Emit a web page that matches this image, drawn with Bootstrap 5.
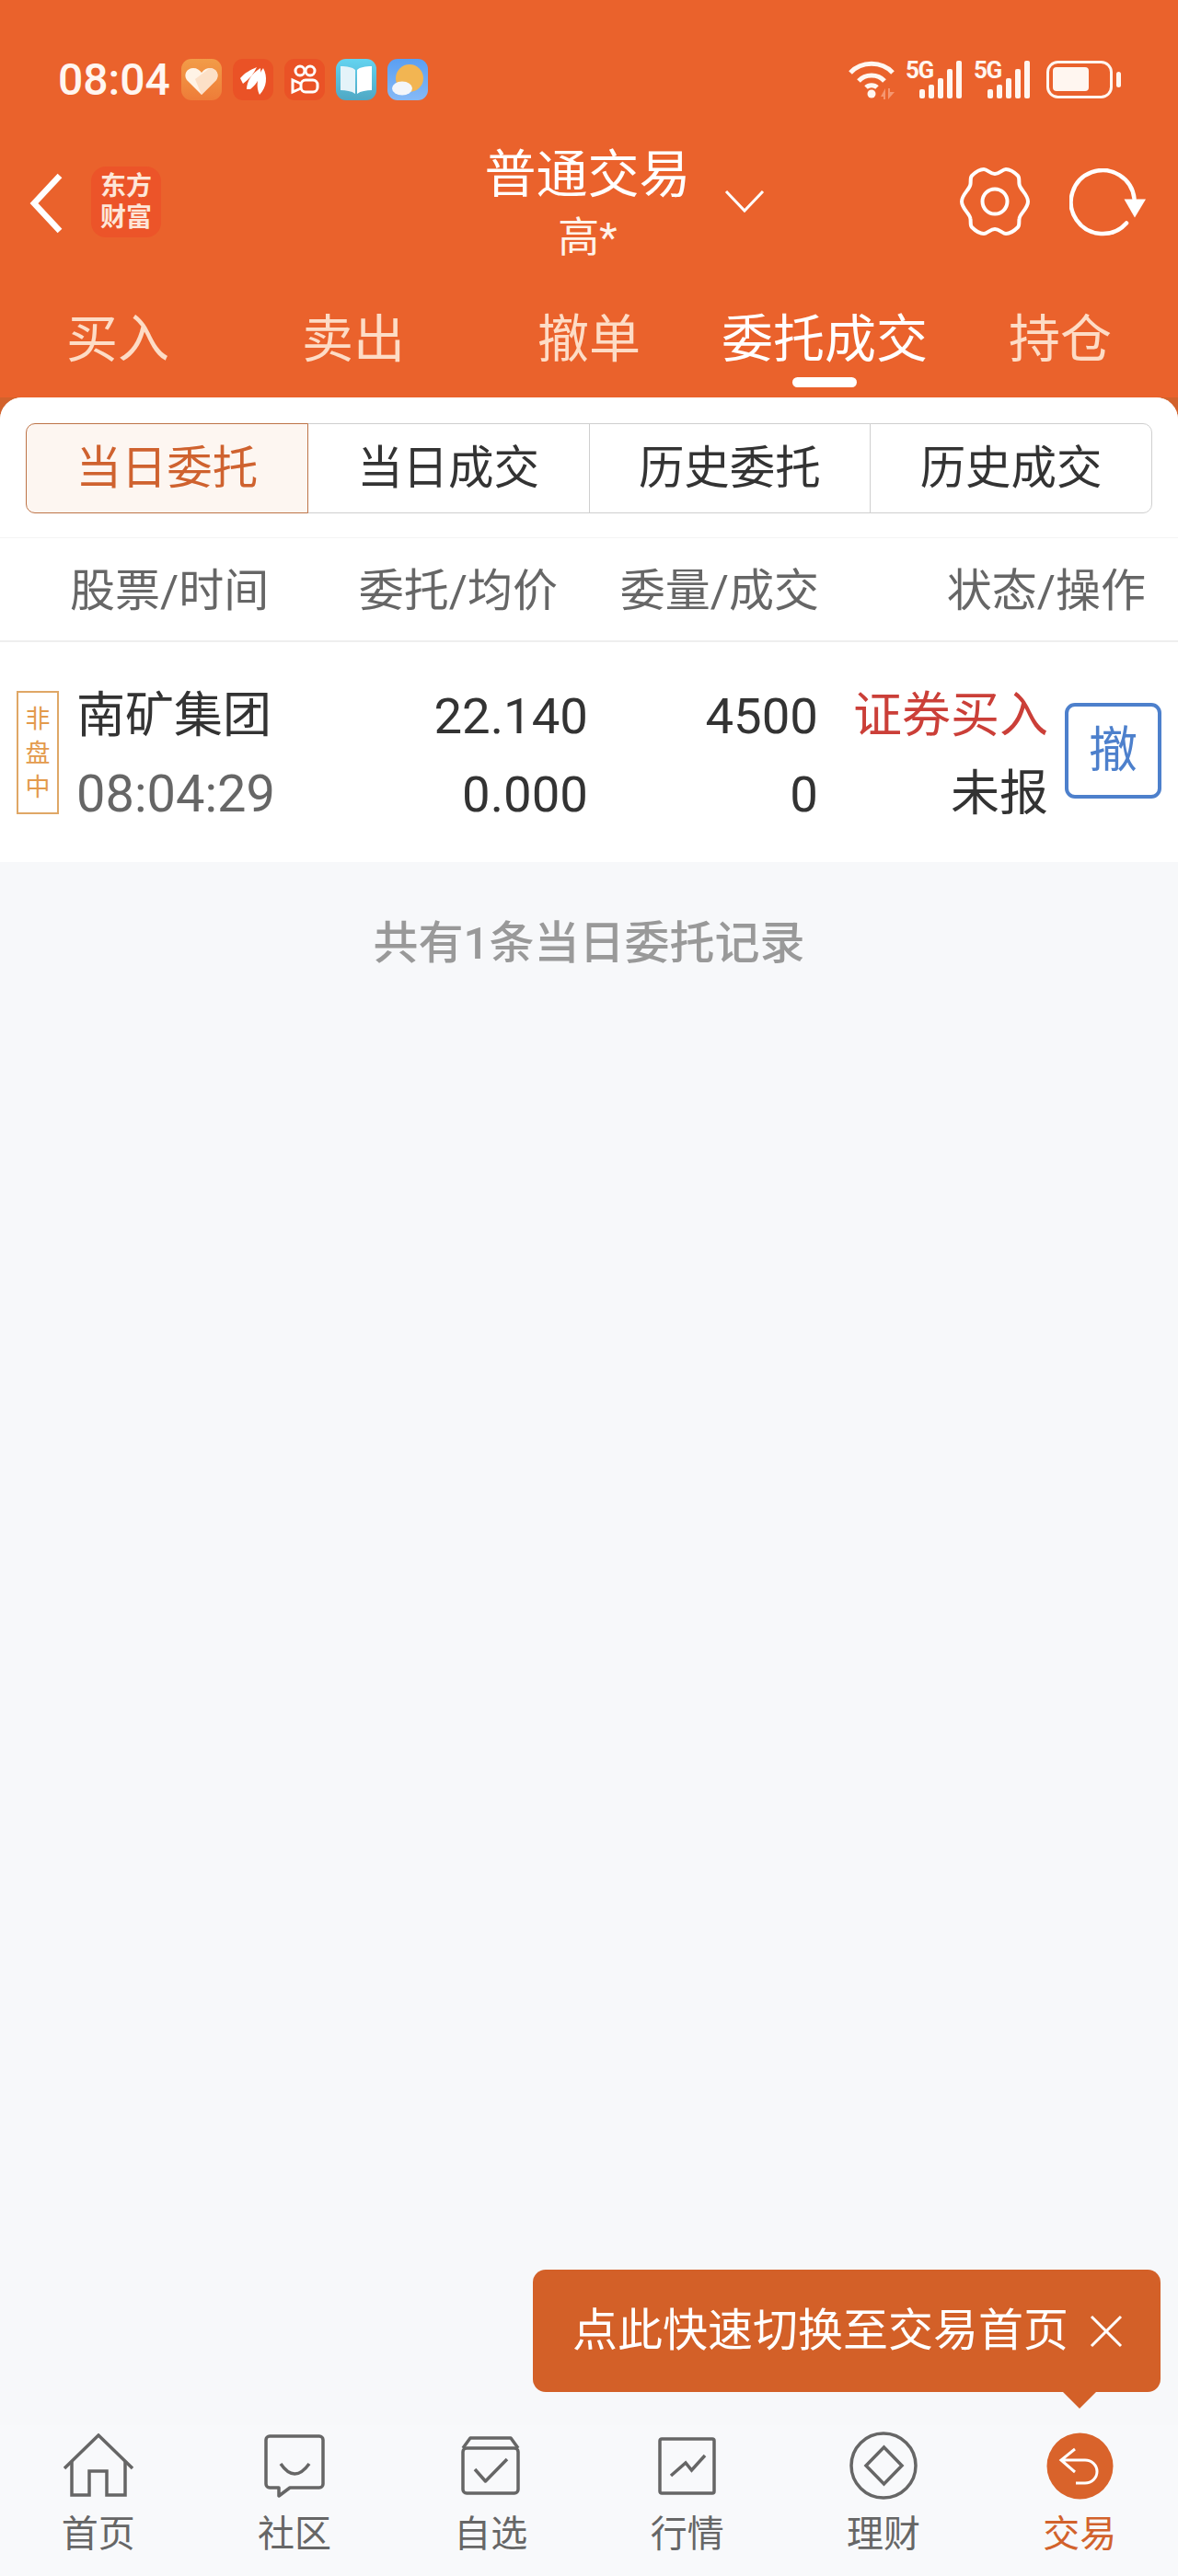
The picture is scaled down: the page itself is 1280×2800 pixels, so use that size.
<!DOCTYPE html>
<html lang="zh-CN">
<head>
  <meta charset="UTF-8" />
  <meta name="viewport" content="width=device-width, initial-scale=1" />
  <title>委托成交</title>
  <link href="https://cdn.jsdelivr.net/npm/bootstrap@5.3.0/dist/css/bootstrap.min.css" rel="stylesheet" />
  <style>
    body {
      margin: 0;
      background: #f7f8fa;
      font-family: Roboto, "Noto Sans CJK SC", sans-serif;
    }
    .app-page { width: 1280px; height: 2800px; }
    .app-head { background: #ea622c; color: #fff; }

    .status-line { height: 150px; padding: 64px 62px 0 63px; }
    .status-time { font-size: 48px; font-weight: 500; line-height: 45px; width: 134px; color: #fff6f0; }
    .status-apps { gap: 12px; }
    .status-apps svg { width: 44px; height: 45px; display: block; }
    .status-sys svg { display: block; }
    .status-sys .signal-icon { margin-top: -6px; }

    .title-line { display: grid; grid-template-columns: 1fr auto 1fr; height: 170px; padding: 0 35px 0 32px; }
    .brand-tile {
      width: 76px; height: 77px; margin: 31px 0 0 30px; border-radius: 16px;
      background: #ec5429; color: #fde6d8; font-size: 28px; font-weight: 700; line-height: 34px;
      text-align: center; padding-top: 5px;
    }
    .back-arrow { margin-top: 38px; }
    .title-main { text-align: center; }
    .title-main div:first-child { font-size: 56px; line-height: 80px; }
    .title-main div:last-child { font-size: 45px; line-height: 58px; color: #fff3ea; }

    .tab-link { display: block; height: 112px; font-size: 56px; line-height: 98px; text-align: center; color: #fddcc6; position: relative; }
    .tab-link.is-on { color: #fff; }
    .tab-link.is-on::after {
      content: ""; position: absolute; left: 50%; top: 90px; width: 70px; height: 11px;
      margin-left: -35px; border-radius: 6px; background: #fff;
    }

    .sheet-back { background: #d2622c; flex: 1; }
    .sheet-main { background: #f7f8fa; height: 100%; border-radius: 24px 24px 0 0; overflow: hidden; }
    .sheet-top { background: #fff; padding-top: 28px; }

    .seg-wrap { padding: 0 28px; }
    .seg-item.btn {
      height: 98px; font-size: 49.5px; line-height: 88px; padding: 0; color: #333;
      background: #fff; border: 1px solid #cfcfcf; border-radius: 10px;
    }
    .seg-item.btn.is-on { color: #cf622f; background: #fdf6f1; border-color: #bd7347; z-index: 2; }

    .list-head {
      display: grid; grid-template-columns: 330px 276px 284px 355px; height: 114px; margin-top: 26px;
      border-top: 1px solid #f4f4f4; border-bottom: 2px solid #eee;
      font-size: 49px; line-height: 116px; color: #666;
    }
    .list-head div { text-align: right; }
    .list-head div:first-child { text-align: left; padding-left: 76px; }

    .order-line { height: 239px; padding: 53px 18px 0; }
    .market-tag {
      width: 46px; height: 134px; border: 2px solid #dfa766; color: #e39a4c; font-size: 27px;
      line-height: 37px; text-align: center; padding-top: 11px; flex: none;
    }
    .order-cols { display: grid; grid-template-columns: 301px 255px 250px 250px; margin: 2px 0 0 19px; }
    .order-cols > div { height: 85px; line-height: 50px; text-align: right; font-size: 53px; color: #333; white-space: nowrap; }
    .order-cols > .name-cell { text-align: left; }
    .order-cols > .num-cell { font-size: 54.5px; }
    .order-cols > .time-cell { font-size: 56px; color: #666; }
    .order-cols > .buy-text { color: #cb3f38; }
    .cancel-btn.btn {
      width: 105px; height: 104px; margin: 13px 0 0 18px; padding: 0; font-size: 53px; line-height: 92px;
      color: #4d80cc; background: #fff; border: 4px solid #4d80cc; border-radius: 11px;
    }

    .empty-note { text-align: center; font-size: 49px; line-height: 60px; font-weight: 500; color: #999; margin-top: 59px; }

    .foot-nav { background: #f8f9fb; height: 164px; padding-top: 6px; }
    .foot-icon { height: 76px; }
    .foot-label { font-size: 40px; line-height: 50px; margin-top: 12px; color: #666; }
    .foot-item.is-on .foot-label { color: #d2622c; }

    .guide-tip {
      position: absolute; right: 19px; bottom: 200px; width: 682px; height: 133px;
      background: #d36028; color: #fff; border-radius: 14px; padding: 0 41px 0 43px; font-size: 49px;
    }
    .guide-tip::after {
      content: ""; position: absolute; left: 576px; top: 133px; border: solid transparent;
      border-width: 18px 18px 0; border-top-color: #d36028;
    }
  </style>
</head>
<body>

<div class="app-page position-relative d-flex flex-column">
  <div class="app-head">
    <div class="status-line d-flex align-items-start">
      <div class="status-time">08:04</div>
      <div class="status-apps d-flex">
        <svg viewBox="0 0 44 45">
          <defs><linearGradient id="heartBg" x1="0" y1="0" x2="0" y2="1"><stop offset="0" stop-color="#f29c48"/><stop offset="1" stop-color="#ee7c38"/></linearGradient></defs>
          <rect width="44" height="45" rx="11" fill="url(#heartBg)"/>
          <path d="M22 39 L6 23 C2 17 6 10 13 10 C17 10 20 12 22 15 C25 11 28 10 31 10 C38 10 42 17 38 23Z" fill="#fff3e6"/>
          <path d="M22 39 L38 23 C42 17 38 10 31 10 L15 22Z" fill="#fbd9bc" opacity=".75"/>
        </svg>
        <svg viewBox="0 0 44 45">
          <rect width="44" height="45" rx="11" fill="#ea5226"/>
          <path d="M8 21 C13 15 19 12 26 9 C23 16 18 22 11 27Z M15 33 C15 25 20 16 30 10 C31 18 27 27 19 33Z M29 39 C25 31 26 19 33 10 C38 19 37 31 29 39Z" fill="#fff"/>
        </svg>
        <svg viewBox="0 0 44 45">
          <rect width="44" height="45" rx="11" fill="#ea5226"/>
          <g fill="none" stroke="#fff" stroke-width="3">
            <circle cx="17" cy="13" r="5"/><circle cx="28" cy="13" r="5"/>
            <rect x="18" y="23" width="18" height="13" rx="5"/>
            <path d="M18 27 L9 23 V36 L18 32"/>
          </g>
        </svg>
        <svg viewBox="0 0 44 45">
          <defs><linearGradient id="bookBg" x1="0" y1="0" x2="0" y2="1"><stop offset="0" stop-color="#63d3f0"/><stop offset="1" stop-color="#4fa8c4"/></linearGradient></defs>
          <rect width="44" height="45" rx="11" fill="url(#bookBg)"/>
          <path d="M5 8 C12 8 18 9 21 12 V38 C17 35 11 34 5 34Z" fill="#e4f3f9"/>
          <path d="M39 8 C32 8 26 9 23 12 V38 C27 35 33 34 39 34Z" fill="#fff"/>
        </svg>
        <svg viewBox="0 0 44 45">
          <defs><linearGradient id="sunBg" x1="0" y1="0" x2="0" y2="1"><stop offset="0" stop-color="#5a9ff2"/><stop offset="1" stop-color="#85b9f6"/></linearGradient></defs>
          <rect width="44" height="45" rx="11" fill="url(#sunBg)"/>
          <circle cx="24" cy="21" r="15" fill="#f2b552"/>
          <ellipse cx="16" cy="32" rx="11" ry="7.5" fill="#f3f6fa"/>
        </svg>
      </div>
      <div class="status-sys d-flex ms-auto">
        <svg width="51" height="45" viewBox="0 0 51 45">
          <g fill="none" stroke="#fff6f0" stroke-width="5">
            <path d="M2 15 C14 2 36 2 48 15"/>
            <path d="M11 24 C18 16 32 16 39 24"/>
            <path d="M19 31 C22 28 28 28 31 31"/>
          </g>
          <circle cx="25" cy="38" r="4.5" fill="#fff6f0"/>
          <path d="M35 41 L40 32 V44 H38 V41Z M43 32 V44 L50 36 H45 V32Z" fill="#f59670"/>
        </svg>
        <svg class="signal-icon" width="62" height="51" viewBox="0 -6 62 51" style="margin-left:11px">
          <text x="0" y="21" font-family="Roboto, sans-serif" font-size="26" font-weight="700" letter-spacing="-1.5" fill="#fff6f0">5G</text>
          <g fill="#fff6f0">
            <rect x="15" y="33" width="6" height="10" rx="2"/>
            <rect x="25" y="28" width="6" height="15" rx="2"/>
            <rect x="35" y="21" width="6" height="22" rx="2"/>
            <rect x="45" y="11" width="6" height="32" rx="2"/>
            <rect x="55" y="2" width="6" height="41" rx="2"/>
          </g>
        </svg>
        <svg class="signal-icon" width="62" height="51" viewBox="0 -6 62 51" style="margin-left:12px">
          <text x="0" y="21" font-family="Roboto, sans-serif" font-size="26" font-weight="700" letter-spacing="-1.5" fill="#fff6f0">5G</text>
          <g fill="#fff6f0">
            <rect x="15" y="33" width="6" height="10" rx="2"/>
            <rect x="25" y="28" width="6" height="15" rx="2"/>
            <rect x="35" y="21" width="6" height="22" rx="2"/>
            <rect x="45" y="11" width="6" height="32" rx="2"/>
            <rect x="55" y="2" width="6" height="41" rx="2"/>
          </g>
        </svg>
        <svg width="81" height="45" viewBox="0 0 81 45" style="margin-left:17px">
          <rect x="1.5" y="3.5" width="69" height="38" rx="11" fill="none" stroke="#fff6f0" stroke-width="3"/>
          <rect x="7" y="9" width="39" height="26" rx="4" fill="#fff6f0"/>
          <rect x="76" y="14" width="5" height="17" rx="2.5" fill="#fff6f0"/>
        </svg>
      </div>
    </div>

    <div class="title-line">
      <div class="d-flex align-items-start">
        <svg class="back-arrow" width="37" height="66" viewBox="0 0 37 66"><path d="M33 3 L5 33 L33 63" fill="none" stroke="#fff" stroke-width="6.5"/></svg>
        <div class="brand-tile">东方<br>财富</div>
      </div>
      <div class="title-main">
        <div>普通交易</div>
        <div>高*</div>
      </div>
      <div class="d-flex align-items-start">
        <svg width="44" height="26" viewBox="0 0 44 26" style="margin:56px 0 0 36px"><path d="M2 2 L22 23 L42 2" fill="none" stroke="#fff" stroke-width="3"/></svg>
        <svg class="ms-auto" width="76" height="76" viewBox="0 0 76 76" style="margin-top:31px"><path d="M38 8 C43 8 46 3 50 3 C54 3 59 6 63 10 C65 12 64 16 64.5 19 C65 25 74 30 74 38 C74 46 65 51 64.5 57 C64 60 65 64 63 66 C59 70 54 73 50 73 C46 73 43 68 38 68 C33 68 30 73 26 73 C22 73 17 70 13 66 C11 64 12 60 11.5 57 C11 51 2 46 2 38 C2 30 11 25 11.5 19 C12 16 11 12 13 10 C17 6 22 3 26 3 C30 3 33 8 38 8Z" fill="none" stroke="#fff" stroke-width="4"/><circle cx="38" cy="38" r="13.5" fill="none" stroke="#fff" stroke-width="4"/></svg>
        <svg width="83" height="76" viewBox="0 0 83 76" style="margin:33px 0 0 43px"><path d="M70.5 33 A34.5 34.5 0 1 0 62 59.5" fill="none" stroke="#fff" stroke-width="4.5" stroke-linecap="round"/><path d="M59.5 33.5 H83 L71 53.5Z" fill="#fff"/></svg>
      </div>
    </div>

    <div class="row g-0">
      <div class="col"><a class="tab-link text-decoration-none">买入</a></div>
      <div class="col"><a class="tab-link text-decoration-none">卖出</a></div>
      <div class="col"><a class="tab-link text-decoration-none">撤单</a></div>
      <div class="col"><a class="tab-link is-on text-decoration-none">委托成交</a></div>
      <div class="col"><a class="tab-link text-decoration-none">持仓</a></div>
    </div>
  </div>

  <div class="sheet-back">
    <div class="sheet-main">
      <div class="sheet-top">
        <div class="seg-wrap">
          <div class="btn-group d-flex">
            <button class="btn seg-item is-on">当日委托</button>
            <button class="btn seg-item">当日成交</button>
            <button class="btn seg-item">历史委托</button>
            <button class="btn seg-item">历史成交</button>
          </div>
        </div>

        <div class="list-head">
          <div>股票/时间</div>
          <div>委托/均价</div>
          <div>委量/成交</div>
          <div>状态/操作</div>
        </div>

        <div class="order-line d-flex align-items-start">
          <div class="market-tag">非<br>盘<br>中</div>
          <div class="order-cols">
            <div class="name-cell">南矿集团</div>
            <div class="num-cell">22.140</div>
            <div class="num-cell">4500</div>
            <div class="buy-text">证券买入</div>
            <div class="name-cell time-cell">08:04:29</div>
            <div class="num-cell">0.000</div>
            <div class="num-cell">0</div>
            <div>未报</div>
          </div>
          <button class="btn cancel-btn">撤</button>
        </div>
      </div>

      <div class="empty-note">共有1条当日委托记录</div>
    </div>
  </div>

  <div class="foot-nav row g-0">
    <div class="col-2 foot-item d-flex flex-column align-items-center">
      <div class="foot-icon d-flex align-items-center">
        <svg width="76" height="70" viewBox="0 0 76 70" fill="none" stroke="#666" stroke-width="3.5"><path d="M1 38 L38 2 L75 38"/><path d="M9 30 V67 H28 V41 H47 V67 H67 V30"/></svg>
      </div>
      <div class="foot-label">首页</div>
    </div>
    <div class="col-2 foot-item d-flex flex-column align-items-center">
      <div class="foot-icon d-flex align-items-center">
        <svg width="66" height="70" viewBox="0 0 66 70" fill="none" stroke="#666" stroke-width="3.5" stroke-linejoin="round"><path d="M6 3 H60 a4 4 0 0 1 4 4 V55 a4 4 0 0 1 -4 4 H28 L16 68 V59 H6 a4 4 0 0 1 -4 -4 V7 a4 4 0 0 1 4 -4Z"/><path d="M18 33 Q33 55 49 33"/></svg>
      </div>
      <div class="foot-label">社区</div>
    </div>
    <div class="col-2 foot-item d-flex flex-column align-items-center">
      <div class="foot-icon d-flex align-items-center">
        <svg width="64" height="64" viewBox="0 0 64 64" fill="none" stroke="#666" stroke-width="3.5" stroke-linejoin="round"><path d="M2 13 L10 2 H54 L62 13"/><rect x="2" y="13" width="60" height="49" rx="4"/><path d="M15 36 L26.5 49 L50 25"/></svg>
      </div>
      <div class="foot-label">自选</div>
    </div>
    <div class="col-2 foot-item d-flex flex-column align-items-center">
      <div class="foot-icon d-flex align-items-center">
        <svg width="63" height="63" viewBox="0 0 63 63" fill="none" stroke="#666" stroke-width="3.5"><rect x="2" y="2" width="59" height="59" rx="2"/><path d="M14 42 L30 28 L36.5 36 L51 20"/></svg>
      </div>
      <div class="foot-label">行情</div>
    </div>
    <div class="col-2 foot-item d-flex flex-column align-items-center">
      <div class="foot-icon d-flex align-items-center">
        <svg width="74" height="74" viewBox="0 0 74 74" fill="none" stroke="#666" stroke-width="3.5"><circle cx="37" cy="37" r="35"/><path d="M37.5 17 L57 37 L37.5 57 L18 37Z"/></svg>
      </div>
      <div class="foot-label">理财</div>
    </div>
    <div class="col-2 foot-item is-on d-flex flex-column align-items-center">
      <div class="foot-icon d-flex align-items-center">
        <svg width="73" height="73" viewBox="0 0 73 73" fill="none"><circle cx="36.5" cy="36.5" r="36" fill="#d9632b"/><path d="M31 18 L16 30 L31 43 M16 30 H42 A13 12.5 0 0 1 42 55 H32" stroke="#fff" stroke-width="3"/></svg>
      </div>
      <div class="foot-label">交易</div>
    </div>
  </div>

  <div class="guide-tip d-flex align-items-center justify-content-between">
    <span>点此快速切换至交易首页</span>
    <svg width="36" height="36" viewBox="0 0 36 36"><path d="M2 2 L34 34 M34 2 L2 34" stroke="#fff" stroke-width="3"/></svg>
  </div>
</div>

<script src="https://cdn.jsdelivr.net/npm/bootstrap@5.3.0/dist/js/bootstrap.bundle.min.js"></script>
</body>
</html>
